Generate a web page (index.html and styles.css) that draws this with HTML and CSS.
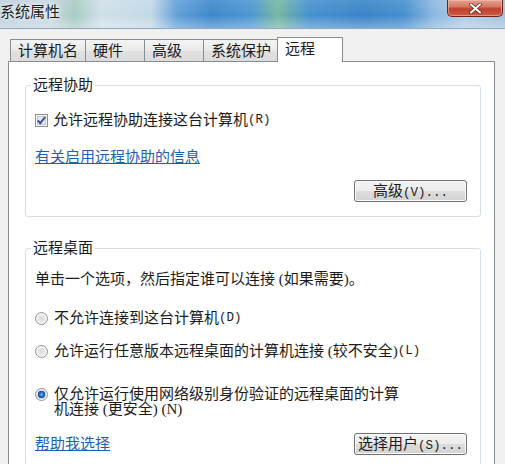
FILE: index.html
```html
<!DOCTYPE html>
<html lang="zh-CN">
<head>
    <meta charset="UTF-8">
    <meta name="viewport" content="width=device-width, initial-scale=1.0">
    <title>系统属性</title>
    <link rel="stylesheet" href="styles.css">
</head>
<body>

<div class="titlebar">
    <span class="title">系统属性</span>
    <button class="close" title="关闭">
        <svg width="15" height="11" viewBox="0 0 15 11">
            <path d="M3 1.5 L12 9.5 M12 1.5 L3 9.5" stroke="#5a1a12" stroke-width="3.6" stroke-linecap="round"/>
            <path d="M3 1.5 L12 9.5 M12 1.5 L3 9.5" stroke="#ffffff" stroke-width="2.2" stroke-linecap="round"/>
        </svg>
    </button>
</div>

<div class="dialog">
    <div class="tabs">
        <div class="tab">计算机名</div>
        <div class="tab">硬件</div>
        <div class="tab">高级</div>
        <div class="tab">系统保护</div>
        <div class="tab active">远程</div>
    </div>

    <div class="panel">
        <fieldset class="group">
            <legend>远程协助</legend>
            <label class="option">
                <span class="check">
                    <svg width="13" height="13" viewBox="0 0 13 13">
                        <rect x="0.5" y="0.5" width="12" height="12" fill="#f6f6f6" stroke="#8f8f8f"/>
                        <rect x="2.5" y="2.5" width="8" height="8" fill="#e4e8ee" stroke="#c2c8d2"/>
                        <path d="M2.8 6.4 L5.2 9.2 L10.2 3" fill="none" stroke="#3b4d8c" stroke-width="1.9"/>
                    </svg>
                </span>
                允许远程协助连接这台计算机<span class="key">(R)</span>
            </label>
            <p class="info"><a class="link" href="#">有关启用远程协助的信息</a></p>
            <div class="actions">
                <button class="btn">高级<span class="key">(V)...</span></button>
            </div>
        </fieldset>

        <fieldset class="group">
            <legend>远程桌面</legend>
            <p class="hint">单击一个选项，然后指定谁可以连接 (如果需要)。</p>
            <label class="option first">
                <span class="radio"></span>
                不允许连接到这台计算机<span class="key">(D)</span>
            </label>
            <label class="option">
                <span class="radio"></span>
                允许运行任意版本远程桌面的计算机连接 (较不安全)<span class="key">(L)</span>
            </label>
            <label class="option wrap">
                <span class="radio on"></span>
                <span class="text">仅允许运行使用网络级别身份验证的远程桌面的计算机连接 (更安全) (N)</span>
            </label>
            <div class="actions split">
                <a class="link" href="#">帮助我选择</a>
                <button class="btn">选择用户<span class="key">(S)...</span></button>
            </div>
        </fieldset>
    </div>
</div>

</body>
</html>
```

FILE: styles.css
```css
/* Page frame */
* {
    box-sizing: border-box;
}

body {
    margin: 0;
    width: 505px;
    height: 464px;
    overflow: hidden;
    background: #f0f0f0;
    font-family: "Liberation Serif", "Noto Sans CJK SC", serif;
    font-size: 15px;
    color: #1b1b1b;
}

/* Aero glass title bar */
.titlebar {
    display: flex;
    align-items: flex-start;
    height: 29px;
    border-bottom: 1px solid #8fa8bd;
    background:
        linear-gradient(to bottom, rgba(255, 255, 255, 0.1), rgba(255, 255, 255, 0) 55%, rgba(255, 255, 255, 0.3)),
        linear-gradient(to right, #bccfdd 0%, #c6d7e1 10%, #a9cbc4 15%, #d0e0e9 20%, #c2d8e6 30%,
            #62a0d8 35%, #3f88cc 42%, #4f98d1 50%, #76b8a0 55%, #4892d0 61%, #3a84c8 72%,
            #4790ce 80%, #8cb8e0 86%, #b2cde4 92%, #a3c2de 100%);
}

.title {
    line-height: 24px;
    text-shadow: 0 0 6px #ffffff, 0 0 3px #ffffff;
}

.close {
    margin-left: auto;
    margin-right: 2px;
    width: 56px;
    height: 17px;
    padding: 0;
    display: flex;
    align-items: center;
    justify-content: center;
    border: 1px solid #6b2418;
    border-top: none;
    border-radius: 0 0 5px 5px;
    background: linear-gradient(#e3a190 0%, #d57a66 40%, #c0412c 55%, #cf5a43 100%);
    box-shadow: inset 0 0 0 1px rgba(255, 200, 190, 0.5);
}

/* Dialog body */
.dialog {
    padding: 8px 10px 0 8px;
}

.tabs {
    display: flex;
    align-items: flex-end;
    height: 24px;
    padding-left: 2px;
}

.tab {
    height: 22px;
    min-width: 60px;
    padding: 2px 7px 0 7px;
    margin-right: -1px;
    line-height: 19px;
    border: 1px solid #898c95;
    border-bottom: none;
    background: linear-gradient(#f4f4f4, #e9e9e9 50%, #e0e0e0 51%, #dcdcdc);
}

.tab.active {
    position: relative;
    z-index: 1;
    height: 25px;
    min-width: 66px;
    margin-left: -1px;
    margin-bottom: -1px;
    padding-top: 0;
    line-height: 23px;
    background: #ffffff;
}

.panel {
    height: 420px;
    padding: 15px 13px 0 16px;
    border: 1px solid #898c95;
    background: #ffffff;
}

/* Group boxes */
.group {
    margin: 0;
    min-width: 0;
    padding: 19px 13px 14px 9px;
    border: 1px solid #d5dfe5;
    border-radius: 3px;
}

.group + .group {
    margin-top: 23px;
    padding-top: 15px;
}

.group legend {
    margin-left: -4px;
    padding: 0 2px;
    line-height: 16px;
}

.option {
    display: flex;
    align-items: center;
    line-height: 16px;
}

.option.first {
    margin-top: 23px;
}

.option + .option {
    margin-top: 17px;
}

.option.wrap {
    margin-top: 28px;
    align-items: flex-start;
    line-height: 15px;
}

.option.wrap .text {
    max-width: 356px;
}

.check {
    display: flex;
    flex: none;
    margin-right: 5px;
}

.radio {
    flex: none;
    width: 13px;
    height: 13px;
    margin-right: 6px;
    border: 1px solid #8c9098;
    border-radius: 50%;
    background: radial-gradient(circle 6px at 50% 50%, #d8d8d8 0, #e6e6e6 3px, #f6f6f6 5px, #ffffff 6px);
}

.radio.on {
    margin-top: 1px;
    background: radial-gradient(circle 6px at 50% 50%, #7ab8ef 0, #2c6fc4 2px, #1c4d93 3.5px, #d9d9d9 4px, #f5f5f5 5.5px);
}

.key {
    font-family: "Liberation Mono", monospace;
    font-size: 12.5px;
}

.info,
.hint {
    margin: 0;
    line-height: 16px;
}

.info {
    margin-top: 21px;
}

.link {
    color: #1f5fae;
    text-decoration: underline;
    line-height: 16px;
}

/* Push buttons */
.actions {
    display: flex;
    justify-content: flex-end;
    margin-top: 15px;
}

.actions.split {
    justify-content: space-between;
    align-items: center;
    margin-top: 16px;
}

.btn {
    width: 113px;
    height: 22px;
    padding: 0;
    font: inherit;
    line-height: 20px;
    color: #1b1b1b;
    border: 1px solid #707070;
    border-radius: 3px;
    background: linear-gradient(#f3f3f3, #ececec 50%, #dedede 51%, #d2d2d2);
    box-shadow: inset 0 0 0 1px #fbfbfb;
}
```
